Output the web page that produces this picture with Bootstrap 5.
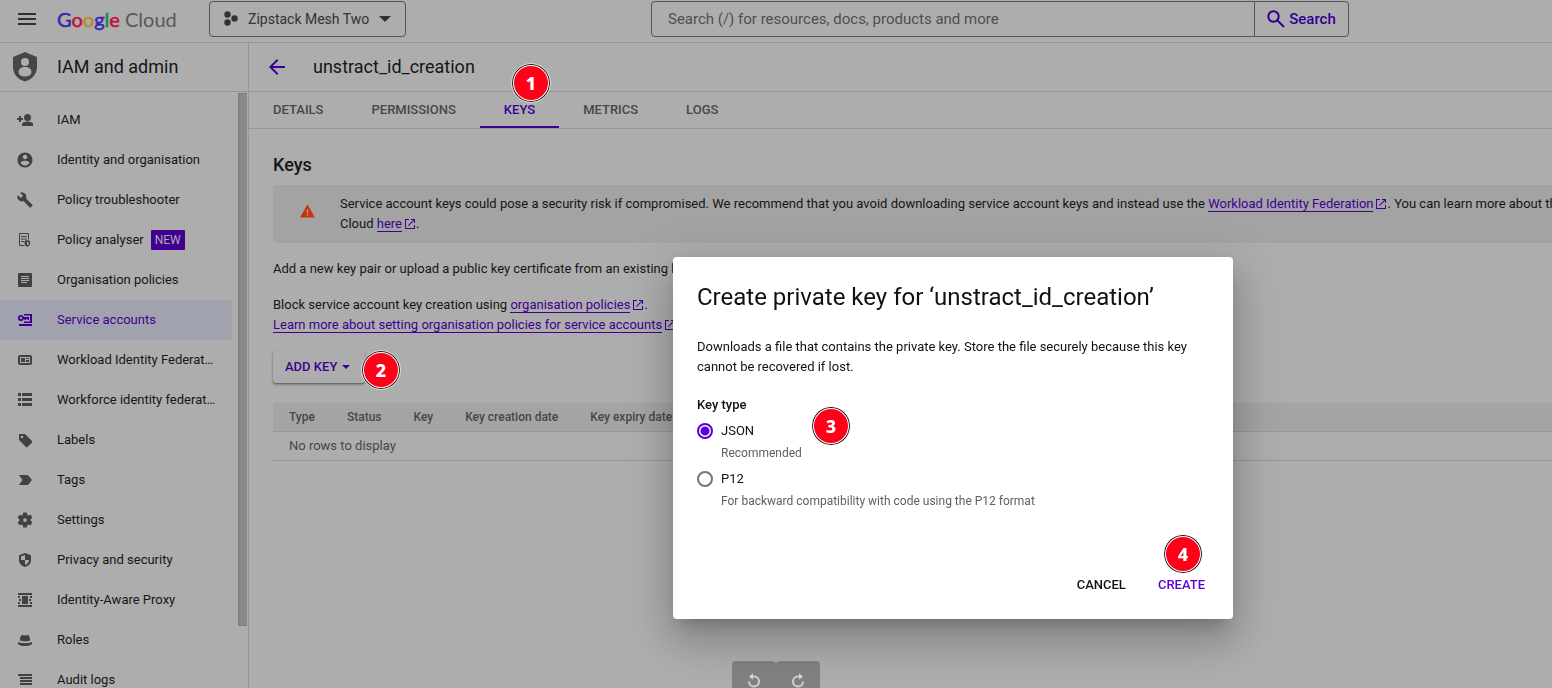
<!DOCTYPE html>
<html lang="en">
<head>
<meta charset="utf-8">
<meta name="viewport" content="width=device-width, initial-scale=1">
<title>Service account keys – IAM and admin</title>
<link href="https://cdn.jsdelivr.net/npm/bootstrap@5.3.0/dist/css/bootstrap.min.css" rel="stylesheet">
<style>
:root{--page:#adadad;--line:#969696;--ink:#161616;--mute:#474747;--icon:#414141;--accent:#3f0091;--field:#50565b}
body{font-family:Roboto,sans-serif;font-size:13px;line-height:20px;color:var(--ink);background:var(--page)}
svg{display:block;fill:currentColor;flex:none}
a{color:var(--accent)}
.topbar{height:43px;border-bottom:1px solid var(--line);padding-bottom:5px}
.menu-btn{width:54px;height:36px;color:#303030}
.brand{width:155px;padding-left:3px;font:20px/34px Lato,sans-serif;color:#55585c;text-decoration:none}
.brand span{-webkit-text-stroke:.5px}
.g-b{color:#3b26b4}.g-r{color:#c0103a}.g-y{color:#b98c24}.g-g{color:#108a4c}
.picker{width:197px;height:36px;border:1px solid var(--field);border-radius:4px;color:#303336;font-size:14px;line-height:36px}
.picker-dots{margin-left:14px;margin-right:10px}
.picker-caret{margin-left:auto;margin-right:14px}
.finder{flex:0 1 698px;margin-left:245px;height:36px;border:1px solid var(--field);border-radius:4px}
.finder input{background:none;border:0;outline:0;padding:0 16px;font-size:15px;color:#303336;min-width:0}
.finder input::placeholder{color:#4d4f52;opacity:1}
.finder button{width:94px;border-left:1px solid var(--field)!important;color:#2f0091;font-size:15px;font-weight:500;line-height:36px}
.shell{height:calc(100vh - 43px)}
.side{width:249px;border-right:1px solid var(--line)}
.shield{color:#464646}
.bar{height:49px;border-bottom:1px solid var(--line);font-size:18px;line-height:24px}
.bar h1{font-size:18px;line-height:24px;font-weight:400}
.side .bar{padding-left:12px;gap:19px}
.main-col .bar{padding-left:20px;gap:28px}
.side-list{padding-top:8px}
.side-list a{height:40px;margin-right:6px;padding-left:16px;gap:23px;color:var(--ink);text-decoration:none;white-space:nowrap}
.side-list a svg{color:var(--icon)}
.side-list a.current{background:#a0a3ad;color:var(--accent)}
.side-list a.current svg{color:var(--accent)}
.new-tag{display:inline-block;background:#3f0091;color:#adadad;font-size:12px;line-height:20px;padding:0 4px;border-radius:1px;margin-left:7px}
.scroll-track{width:10px;padding-top:1px}
.scroll-thumb{width:9px;height:533px;background:#888;border:1px solid #7c7c7c;border-right:0}
.tabs{height:37px;border-bottom:1px solid var(--line)}
.tabs a{padding:8px 24px 7px;font-weight:500;line-height:20px;color:var(--mute);text-decoration:none;position:relative}
.tabs a.current{color:var(--accent);border-bottom:2px solid var(--accent)}
.content{padding:24px 0 0 24px;white-space:nowrap}
.content h2{font-size:18px;line-height:24px;font-weight:500;margin-bottom:8px}
.notice{background:#a3a3a3;border-radius:4px 0 0 4px;padding:9px 0;gap:25px}
.notice>svg{margin:10px 0 0 27px;color:#c6340c}
.notice,.content p{margin-bottom:16px}
.ul{text-decoration:none;border-bottom:1px solid currentColor}
.ext{display:inline-block;vertical-align:-2px;margin-left:2px;color:var(--accent)}
.add-key{height:32px;padding:0 15px 0 12px;font-size:13px;font-weight:500;color:var(--accent);border-radius:3px;box-shadow:0 1px 2px rgba(0,0,0,.4),0 2px 3px rgba(0,0,0,.15);gap:5px}
.keys-grid{margin:20px 0 0;width:100%;font-size:13px;color:var(--mute)}
.keys-grid th{height:28px;padding:0 16px;font-size:12px;font-weight:500;background:#a4a4a4;border-bottom:1px solid var(--line)}
.keys-grid td{height:29px;padding:0 16px;border-bottom:1px solid var(--line)}
.step{position:absolute;z-index:5;width:40px;height:40px;border-radius:50%;background:#ff0019;color:#fff;border:1px solid #ddd;box-shadow:inset 0 0 0 1px #111,inset 0 0 0 2px #fff;font:800 18px/38px "Noto Sans",sans-serif;text-align:center}
.step-tab{left:31px;top:-29px}
.step-add{left:88px;top:-1px}
.step-type{left:114px;top:-15px}
.step-create{left:17px;top:-35px}
.dialog-box .step{border-color:#fff}
.overlay{position:fixed;inset:0;padding:257px 0 0 673px;z-index:4;pointer-events:none}
.dialog-box{width:560px;background:#fff;border-radius:4px;color:#111;pointer-events:auto;box-shadow:0 11px 15px -7px rgba(0,0,0,.2),0 24px 38px 3px rgba(0,0,0,.14),0 9px 46px 8px rgba(0,0,0,.12)}
.dialog-body{padding:24px 24px 0}
.dialog-box h2{font-size:24px;line-height:32px;font-weight:400;margin-bottom:24px}
.dialog-body p{margin-bottom:18px}
.dialog-box legend{font-size:13px;line-height:20px;font-weight:500;margin-bottom:6px}
.choice{display:grid;grid-template-columns:16px 1fr;column-gap:8px;align-items:center;margin-bottom:4px}
.choice input{appearance:none;width:16px;height:16px;margin:0;border:2px solid #757575;border-radius:50%}
.choice input:checked{border-color:#5a00d2;background:radial-gradient(#5a00d2 0 4px,transparent 5px)}
.choice small{grid-column:2;font-size:12px;line-height:24px;color:#5f6063}
.actions{padding:52px 16px 18px;gap:8px}
.actions button{height:32px;padding:0 12px;font-size:13px;font-weight:500;color:#111}
.actions .go{color:#5a00d2;position:relative}
.history{position:fixed;z-index:3;bottom:0;left:50%;transform:translateX(-50%)}
.history button{width:44px;height:27px;padding:11px 0 0;background:#808080;border-radius:4px 4px 0 0;color:#d0d0d0}
</style>
</head>
<body class="overflow-hidden">
<header class="topbar d-flex align-items-center">
  <button class="menu-btn btn p-0 border-0 d-flex align-items-center justify-content-center" aria-label="Main menu"><svg width="18" height="12"><path d="M0 0h18v2H0zM0 5h18v2H0zM0 10h18v2H0z"/></svg></button>
  <a class="brand" href="#"><span class="g-b">G</span><span class="g-r">o</span><span class="g-y">o</span><span class="g-b">g</span><span class="g-g">l</span><span class="g-r">e</span> Cloud</a>
  <button class="picker btn p-0 d-flex align-items-center">
    <svg class="picker-dots" width="14" height="16"><circle cx="3.500" cy="3.500" r="3.200"/><circle cx="3.500" cy="11.500" r="3.200"/><circle cx="10.500" cy="7.500" r="3.200"/></svg>
    <span>Zipstack Mesh Two</span>
    <svg class="picker-caret" width="12" height="6"><path d="M0 0h12L6 6z"/></svg>
  </button>
  <form class="finder d-flex" role="search">
    <input class="flex-grow-1" type="search" aria-label="Search" placeholder="Search (/) for resources, docs, products and more">
    <button type="button" class="btn p-0 border-0 rounded-0 d-flex align-items-center justify-content-center gap-1"><svg width="18" height="18" viewBox="0 0 18 18" fill="none" stroke="currentColor" stroke-width="2"><circle cx="6.500" cy="6.500" r="5.200" fill="none"/><path d="M10.500 10.500l6.500 6.500"/></svg>Search</button>
  </form>
</header>
<div class="shell d-flex">
  <aside class="side d-flex flex-column flex-shrink-0">
    <div class="bar d-flex align-items-center flex-shrink-0">
      <svg class="shield" width="26" height="30" viewBox="0 0 26 30"><path fill-rule="evenodd" d="M13 0L1 5v10c0 7 5 12.500 12 14.500C20 27.500 25 22 25 15V5zM13 6a4 4 0 1 1 0 8 4 4 0 0 1 0-8zM13 15c4 0 6.500 2 6.500 5 0 2.500-2.500 4.500-6.500 4.500S6.500 22.500 6.500 20c0-3 2.500-5 6.500-5z"/></svg>
      <span>IAM and admin</span>
    </div>
    <div class="d-flex flex-grow-1 overflow-hidden">
      <nav class="side-list flex-grow-1">
        <a class="d-flex align-items-center" href="#"><svg width="18" height="18" viewBox="0 0 18 18"><path d="M3 5h2v2h2v2H5v2H3V9H1V7h2z"/><circle cx="11.500" cy="6.500" r="3.500"/><path d="M6 15v-2c0-1.500 3-2.500 5.500-2.500S17 11.500 17 13v2z"/></svg>IAM</a>
        <a class="d-flex align-items-center" href="#"><svg width="18" height="18" viewBox="0 0 24 24"><path d="M12 2C6.480 2 2 6.480 2 12s4.480 10 10 10 10-4.480 10-10S17.520 2 12 2zm0 3c1.660 0 3 1.340 3 3s-1.340 3-3 3-3-1.340-3-3 1.340-3 3-3zm0 14.200c-2.500 0-4.710-1.280-6-3.220.03-1.990 4-3.080 6-3.080 1.990 0 5.970 1.090 6 3.080-1.290 1.940-3.500 3.220-6 3.220z"/></svg>Identity and organisation</a>
        <a class="d-flex align-items-center" href="#"><svg width="18" height="18" viewBox="-1 -1 26 26"><path d="M22.700 19l-9.100-9.100c.9-2.300.4-5-1.500-6.900-2-2-5-2.400-7.400-1.300L9 6 6 9 1.600 4.700C.4 7.100.9 10.100 2.900 12.100c1.900 1.900 4.600 2.400 6.900 1.500l9.100 9.100c.4.4 1 .4 1.400 0l2.300-2.300c.5-.4.5-1.100.1-1.400z"/></svg>Policy troubleshooter</a>
        <a class="d-flex align-items-center" href="#"><svg width="18" height="18" viewBox="0 0 18 18"><path fill="none" stroke="currentColor" d="M8.500 14.500h-5v-12h9v6M5 5.500h6M5 8h6M5 10.500h3"/><path fill-rule="evenodd" d="M11 9l3 1v2.500c0 1.500-1 2.500-2.500 3.300C10 15 8.500 14 8.500 12.500V10zM11 11v3h1.500v-3z"/></svg><span>Policy analyser<span class="new-tag">NEW</span></span></a>
        <a class="d-flex align-items-center" href="#"><svg width="18" height="18" viewBox="0 0 18 18"><path fill-rule="evenodd" d="M3 2h12a1 1 0 0 1 1 1v12a1 1 0 0 1-1 1H3a1 1 0 0 1-1-1V3a1 1 0 0 1 1-1zM5 5v1h8V5zM5 7v1h8V7zM5 9v1h8V9zM5 11v1h6v-1z"/></svg>Organisation policies</a>
        <a class="current d-flex align-items-center" href="#"><svg width="18" height="18" viewBox="0 0 18 18"><path fill-rule="evenodd" d="M5 4a3 3 0 0 1 2.800 2H13v3h-1.500V8H10v1H8.500V8h-.7A3 3 0 1 1 5 4zm0 1.800a1.200 1.200 0 1 0 0 2.400 1.200 1.200 0 0 0 0-2.400z"/><path d="M8 3h8v9H8v-1.500h6v-6H8zM3 13h13v2H3z"/></svg>Service accounts</a>
        <a class="d-flex align-items-center" href="#"><svg width="18" height="18" viewBox="0 0 18 18"><rect x="3" y="5" width="12" height="8" rx="1" fill="none" stroke="currentColor" stroke-width="2"/><path d="M5 7h4v4H5zM10 7h3v1h-3zM10 9h3v2h-3z"/></svg>Workload Identity Federat…</a>
        <a class="d-flex align-items-center" href="#"><svg width="18" height="18" viewBox="0 0 18 18"><path d="M2 2h3v3H2zM6 2h10v3H6zM2 7h3v3H2zM6 7h10v3H6zM2 12h3v3H2zM6 12h10v3H6z"/></svg>Workforce identity federat…</a>
        <a class="d-flex align-items-center" href="#"><svg width="18" height="18" viewBox="0 0 18 18"><path fill-rule="evenodd" d="M4 3h5l7 7c.5.5.5 1 0 1.500L11.500 16c-.5.5-1 .5-1.500 0L3 9V4c0-.6.4-1 1-1zm2 1.700A1.300 1.300 0 1 0 6 7.300 1.300 1.300 0 0 0 6 4.700z"/></svg>Labels</a>
        <a class="d-flex align-items-center" href="#"><svg width="18" height="18" viewBox="0 0 18 18"><path d="M3 4h8c.6 0 1 .2 1.300.6L16 9l-3.700 4.400c-.3.4-.7.6-1.300.6H3l3.500-5z"/></svg>Tags</a>
        <a class="d-flex align-items-center" href="#"><svg width="18" height="18" viewBox="0 0 24 24"><path fill-rule="evenodd" d="M19.430 12.980c.04-.32.07-.64.07-.98s-.03-.66-.07-.98l2.110-1.650c.19-.15.24-.42.12-.64l-2-3.460c-.12-.22-.39-.3-.61-.22l-2.490 1c-.52-.4-1.080-.73-1.690-.98l-.38-2.650C14.460 2.180 14.250 2 14 2h-4c-.25 0-.46.18-.49.42l-.38 2.650c-.61.25-1.170.59-1.690.98l-2.490-1c-.23-.09-.49 0-.61.22l-2 3.460c-.13.22-.07.49.12.64l2.110 1.650c-.04.32-.07.65-.07.98s.03.66.07.98l-2.110 1.650c-.19.15-.24.42-.12.64l2 3.460c.12.22.39.3.61.22l2.490-1c.52.4 1.080.73 1.690.98l.38 2.650c.03.24.24.42.49.42h4c.25 0 .46-.18.49-.42l.38-2.650c.61-.25 1.170-.59 1.690-.98l2.490 1c.23.09.49 0 .61-.22l2-3.460c.12-.22.07-.49-.12-.64zM12 14.500a2.500 2.500 0 1 1 0-5 2.500 2.500 0 0 1 0 5z"/></svg>Settings</a>
        <a class="d-flex align-items-center" href="#"><svg width="18" height="18" viewBox="0 0 18 18"><path fill-rule="evenodd" d="M9 2l6 2.200V9c0 3.500-2.500 6-6 7-3.500-1-6-3.500-6-7V4.200zM9 4L5 5.500V9h4zM9 9v5c2.500-1 4-2.700 4-5z"/></svg>Privacy and security</a>
        <a class="d-flex align-items-center" href="#"><svg width="18" height="18" viewBox="0 0 18 18"><path d="M2 2h14v2H2zM2 14h14v2H2zM6 5h6v8H6zM2 5h2v2H2zM14 5h2v2h-2zM3 8h2v2H3zM13 8h2v2h-2zM2 11h2v2H2zM14 11h2v2h-2z"/></svg>Identity-Aware Proxy</a>
        <a class="d-flex align-items-center" href="#"><svg width="18" height="18" viewBox="0 0 18 18"><path d="M4 9.500c0-3 .7-5.500 2.300-5.500 1 0 1.700.5 2.700.5S10.700 4 11.700 4C13.300 4 14 6.500 14 9.500c-1 .6-3 .8-5 .8s-4-.2-5-.8zM2 11c2 .8 4.500 1.200 7 1.200s5-.4 7-1.200v2c-1.500 1.500-4 2-7 2s-5.500-.5-7-2z"/></svg>Roles</a>
        <a class="d-flex align-items-center" href="#"><svg width="18" height="18" viewBox="0 0 18 18"><path d="M2 3h14v2H2zM4 6h12v2H4zM4 9h12v2H4zM4 12h12v2H4z"/></svg>Audit logs</a>
      </nav>
      <div class="scroll-track flex-shrink-0"><div class="scroll-thumb"></div></div>
    </div>
  </aside>
  <main class="main-col flex-grow-1 overflow-hidden">
    <div class="bar d-flex align-items-center">
      <a href="#" aria-label="Back"><svg width="16" height="16" viewBox="0 0 16 16"><path d="M16 7H3.800l5.600-5.600L8 0 0 8l8 8 1.400-1.400L3.800 9H16z"/></svg></a>
      <h1 class="mb-0">unstract_id_creation</h1>
    </div>
    <nav class="tabs d-flex">
      <a href="#">DETAILS</a><a href="#">PERMISSIONS</a><a class="current" href="#">KEYS<span class="step step-tab">1</span></a><a href="#">METRICS</a><a href="#">LOGS</a>
    </nav>
    <section class="content">
      <h2>Keys</h2>
      <div class="notice d-flex align-items-start">
        <svg width="15" height="14" viewBox="0 0 15 13"><path fill-rule="evenodd" d="M7.500 0L15 13H0zM6.800 5v3.500h1.400V5zM6.800 9.500V11h1.400V9.500z"/></svg>
        <div>Service account keys could pose a security risk if compromised. We recommend that you avoid downloading service account keys and instead use the <a class="ul" href="#">Workload Identity Federation</a><svg class="ext" width="12" height="12" viewBox="0 0 12 12"><path d="M1 1h4v1H2v8h8V7h1v4H1zM7 1h4v4h-1V2.700L4.700 8 4 7.300 9.300 2H7z"/></svg>. You can learn more about the<br>Cloud <a class="ul" href="#">here</a><svg class="ext" width="12" height="12" viewBox="0 0 12 12"><path d="M1 1h4v1H2v8h8V7h1v4H1zM7 1h4v4h-1V2.700L4.700 8 4 7.300 9.300 2H7z"/></svg>.</div>
      </div>
      <p>Add a new key pair or upload a public key certificate from an existing key pair.</p>
      <p>Block service account key creation using <a class="ul" href="#">organisation policies</a><svg class="ext" width="12" height="12" viewBox="0 0 12 12"><path d="M1 1h4v1H2v8h8V7h1v4H1zM7 1h4v4h-1V2.700L4.700 8 4 7.300 9.300 2H7z"/></svg>.<br><a class="ul" href="#">Learn more about setting organisation policies for service accounts</a><svg class="ext" width="12" height="12" viewBox="0 0 12 12"><path d="M1 1h4v1H2v8h8V7h1v4H1zM7 1h4v4h-1V2.700L4.700 8 4 7.300 9.300 2H7z"/></svg></p>
      <div class="position-relative">
        <button class="add-key btn border-0 d-flex align-items-center">ADD KEY<svg width="8" height="4"><path d="M0 0h8L4 4z"/></svg></button>
        <span class="step step-add">2</span>
      </div>
      <table class="keys-grid">
        <thead><tr><th>Type</th><th>Status</th><th>Key</th><th>Key creation date</th><th class="w-100">Key expiry date</th></tr></thead>
        <tbody><tr><td colspan="5">No rows to display</td></tr></tbody>
      </table>
    </section>
  </main>
</div>
<div class="history d-flex">
  <button class="btn border-0 d-flex justify-content-center" aria-label="Undo"><svg width="14" height="16" viewBox="0 0 14 16"><path d="M4 4.500h3a5 5 0 1 1-5 5" fill="none" stroke="currentColor" stroke-width="2"/><path d="M6 1v7L2 4.500z"/></svg></button>
  <button class="btn border-0 d-flex justify-content-center" aria-label="Redo"><svg width="14" height="16" viewBox="0 0 14 16"><path d="M10 4.500H7a5 5 0 1 0 5 5" fill="none" stroke="currentColor" stroke-width="2"/><path d="M8 1v7l4-3.500z"/></svg></button>
</div>
<div class="overlay">
  <div class="dialog-box" role="dialog" aria-labelledby="dlg-title">
    <div class="dialog-body">
      <h2 id="dlg-title">Create private key for ‘unstract_id_creation’</h2>
      <p>Downloads a file that contains the private key. Store the file securely because this key cannot be recovered if lost.</p>
      <fieldset>
        <legend>Key type</legend>
        <div class="choice position-relative"><input type="radio" name="kt" id="kt-json" checked><label for="kt-json">JSON</label><small>Recommended</small><span class="step step-type">3</span></div>
        <div class="choice"><input type="radio" name="kt" id="kt-p12"><label for="kt-p12">P12</label><small>For backward compatibility with code using the P12 format</small></div>
      </fieldset>
    </div>
    <div class="actions d-flex justify-content-end">
      <button class="btn border-0">CANCEL</button>
      <button class="go btn border-0">CREATE<span class="step step-create">4</span></button>
    </div>
  </div>
</div>
<script src="https://cdn.jsdelivr.net/npm/bootstrap@5.3.0/dist/js/bootstrap.bundle.min.js"></script>
</body>
</html>
